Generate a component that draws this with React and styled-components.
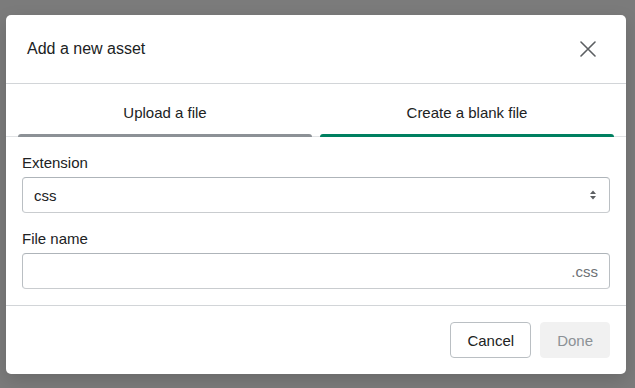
import React from 'react';
import styled, { createGlobalStyle } from 'styled-components';

const GlobalStyle = createGlobalStyle`
    html, body {
        margin: 0;
        padding: 0;
        background: #7b7b7b;
    }
    body {
        font-family: "Liberation Sans", Arial, sans-serif;
        color: #202223;
    }
`

const Backdrop = styled.div`
    width: 635px;
    height: 388px;
    box-sizing: border-box;
    padding: 15px 9px 0 6px;
    background: #7b7b7b;
`

const Modal = styled.div`
    width: 620px;
    background: #fff;
    border-radius: 5px;
    box-shadow: 0 6px 18px rgba(0, 0, 0, 0.14);
    overflow: hidden;
`

const Header = styled.div`
    height: 68px;
    display: flex;
    align-items: center;
    justify-content: space-between;
    padding: 0 20px 0 21px;
    border-bottom: 1px solid #d2d5d8;
`

const Title = styled.h2`
    margin: 0;
    font-size: 16px;
    font-weight: 400;
    line-height: 24px;
`

const CloseButton = styled.button`
    width: 28px;
    height: 28px;
    margin-right: 4px;
    padding: 0;
    border: none;
    background: none;
    display: flex;
    align-items: center;
    justify-content: center;
    cursor: pointer;
`

const TabList = styled.div`
    display: flex;
    gap: 8px;
    padding: 0 12px;
    border-bottom: 1px solid #e1e3e5;
`

const Tab = styled.button`
    flex: 1;
    height: 53px;
    padding: 3px 0 0;
    border: none;
    background: none;
    font-family: inherit;
    font-size: 15px;
    color: #202223;
    position: relative;
    margin-bottom: -1px;

    &::after{
        content: '';
        position: absolute;
        left: 0;
        right: 0;
        bottom: 0;
        height: 3px;
        border-radius: 3px 3px 0 0;
        background: ${p => p.$active ? '#008060' : '#8c9196'};
    }
`

const Body = styled.div`
    padding: 16px;
    display: flex;
    flex-direction: column;
    gap: 16px;
    border-bottom: 1px solid #d2d5d8;
`

const Field = styled.label`
    display: flex;
    flex-direction: column;
    gap: 4px;
`

const Label = styled.span`
    font-size: 15px;
    line-height: 20px;
`

const Box = styled.div`
    height: 36px;
    box-sizing: border-box;
    border: 1px solid #babfc3;
    border-top-color: #aeb4b9;
    border-bottom-color: #c9cccf;
    border-radius: 4px;
    display: flex;
    align-items: center;
    padding: 0 11px;
    font-size: 15px;
`

const Value = styled.span`
    flex: 1;
`

const TextInput = styled.input`
    flex: 1;
    border: none;
    outline: none;
    padding: 0;
    font-family: inherit;
    font-size: 15px;
    background: none;
`

const Suffix = styled.span`
    color: #6d7175;
`

const Footer = styled.div`
    display: flex;
    justify-content: flex-end;
    gap: 9px;
    padding: 16px;
`

const Button = styled.button`
    height: 36px;
    padding: 0 16px;
    border-radius: 4px;
    font-family: inherit;
    font-size: 15px;
    border: 1px solid ${p => p.$disabled ? '#f1f1f1' : '#babfc3'};
    background: ${p => p.$disabled ? '#f1f1f1' : '#fff'};
    color: ${p => p.$disabled ? '#8c9196' : '#202223'};
    cursor: ${p => p.$disabled ? 'default' : 'pointer'};
`

const SelectArrows = () => (
    <svg width="10" height="12" viewBox="0 0 10 12">
        <path d="M5 1.5 L8 5 H2 Z" fill="#5c5f62" />
        <path d="M5 10.5 L8 7 H2 Z" fill="#5c5f62" />
    </svg>
)

const CloseIcon = () => (
    <svg width="16" height="16" viewBox="0 0 16 16">
        <path d="M1 1 L15 15 M15 1 L1 15" stroke="#5c5f62" strokeWidth="1.6" strokeLinecap="round" />
    </svg>
)

export default function App() {
    return (
        <>
            <GlobalStyle />
            <Backdrop>
                <Modal>
                    <Header>
                        <Title>Add a new asset</Title>
                        <CloseButton aria-label="Close"><CloseIcon /></CloseButton>
                    </Header>
                    <TabList>
                        <Tab>Upload a file</Tab>
                        <Tab $active>Create a blank file</Tab>
                    </TabList>
                    <Body>
                        <Field>
                            <Label>Extension</Label>
                            <Box>
                                <Value>css</Value>
                                <SelectArrows />
                            </Box>
                        </Field>
                        <Field>
                            <Label>File name</Label>
                            <Box>
                                <TextInput />
                                <Suffix>.css</Suffix>
                            </Box>
                        </Field>
                    </Body>
                    <Footer>
                        <Button>Cancel</Button>
                        <Button $disabled>Done</Button>
                    </Footer>
                </Modal>
            </Backdrop>
        </>
    );
}
